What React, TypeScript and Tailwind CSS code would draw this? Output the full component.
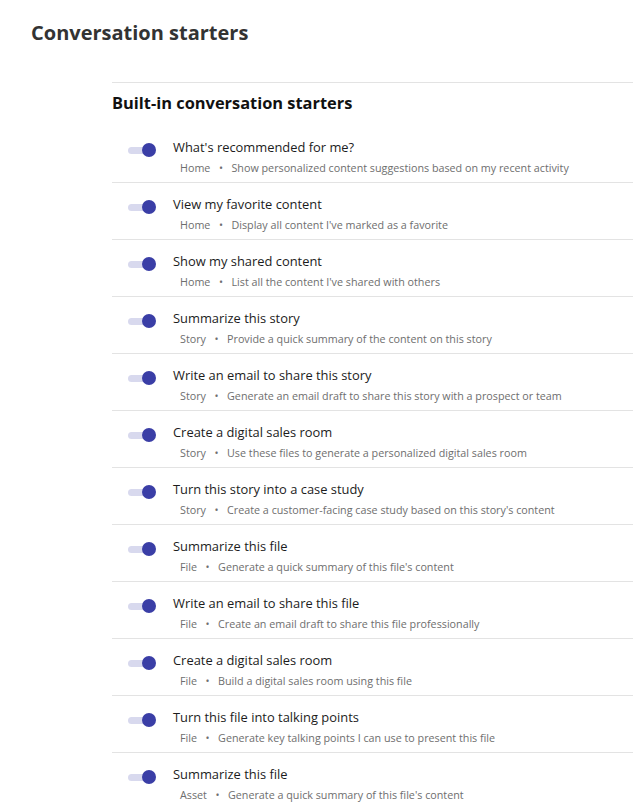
import React from "react";

type Starter = { title: string; scope: string; desc: string };

const starters: Starter[] = [
  { title: "What's recommended for me?", scope: "Home", desc: "Show personalized content suggestions based on my recent activity" },
  { title: "View my favorite content", scope: "Home", desc: "Display all content I've marked as a favorite" },
  { title: "Show my shared content", scope: "Home", desc: "List all the content I've shared with others" },
  { title: "Summarize this story", scope: "Story", desc: "Provide a quick summary of the content on this story" },
  { title: "Write an email to share this story", scope: "Story", desc: "Generate an email draft to share this story with a prospect or team" },
  { title: "Create a digital sales room", scope: "Story", desc: "Use these files to generate a personalized digital sales room" },
  { title: "Turn this story into a case study", scope: "Story", desc: "Create a customer-facing case study based on this story's content" },
  { title: "Summarize this file", scope: "File", desc: "Generate a quick summary of this file's content" },
  { title: "Write an email to share this file", scope: "File", desc: "Create an email draft to share this file professionally" },
  { title: "Create a digital sales room", scope: "File", desc: "Build a digital sales room using this file" },
  { title: "Turn this file into talking points", scope: "File", desc: "Generate key talking points I can use to present this file" },
  { title: "Summarize this file", scope: "Asset", desc: "Generate a quick summary of this file's content" },
];

function Toggle() {
  return (
    <div className="relative h-[14px] w-[28px] shrink-0">
      <div className="absolute left-0 top-[4px] h-[7px] w-[24px] rounded-full bg-[#d8d9ee]" />
      <div className="absolute right-0 top-0 h-[14px] w-[14px] rounded-full bg-[#3a3ea6]" />
    </div>
  );
}

export default function App() {
  return (
    <div
      className="min-h-[805px] w-full overflow-hidden bg-white"
      style={{ fontFamily: '"Open Sans", "Noto Sans", sans-serif' }}
    >
      <h1 className="pl-[31px] pt-[19px] text-[20px] font-bold leading-[28px] text-[#333333]">
        Conversation starters
      </h1>
      <section className="ml-[112px] mt-[35px] border-t border-[#e3e3e3]">
        <h2 className="h-[43px] pt-[8px] text-[16.4px] font-bold leading-[24px] text-[#111111]">
          Built-in conversation starters
        </h2>
        <ul>
          {starters.map((s, i) => (
            <li key={i} className="flex h-[57px] border-b border-[#e3e3e3] pl-[16px]">
              <div className="pt-[17px]">
                <Toggle />
              </div>
              <div className="ml-[17px] flex flex-col pt-[12px]">
                <div className="text-[12.9px] leading-[18px] text-[#1c1c1c]">{s.title}</div>
                <div className="mt-[4px] pl-[7px] text-[10.75px] leading-[16px] text-[#6e6e6e]">
                  {s.scope}
                  <span className="mx-[8.5px]">•</span>
                  {s.desc}
                </div>
              </div>
            </li>
          ))}
        </ul>
      </section>
    </div>
  );
}
